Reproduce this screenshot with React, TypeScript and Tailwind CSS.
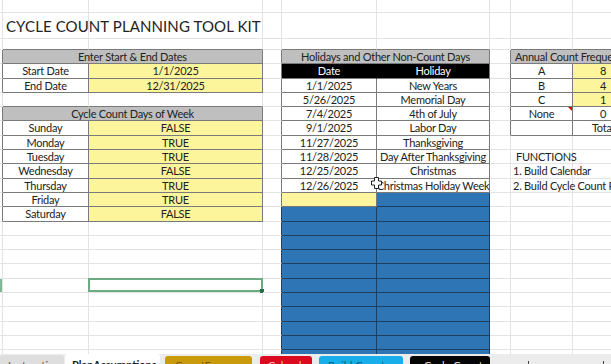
type Kind = "gray" | "black" | "yel" | "wht" | "blue";
type Cell = {
	t?: string;
	k?: Kind;
	span?: boolean;
	left?: boolean;
	big?: boolean;
	pad?: string;
	sel?: boolean;
	mark?: boolean;
	note?: boolean;
	cursor?: boolean;
};
type Row = (Cell | null)[];

// column widths: row header edge, A, B, C, D, E, F, G, H
const W = ["w-[3px]", "w-[86px]", "w-[174px]", "w-[19px]", "w-[95px]", "w-[113px]", "w-[21px]", "w-[62px]", "w-[61px]"];
const W2: Record<number, string> = { 1: "w-[260px]", 4: "w-[208px]", 7: "w-[123px]" };
const H = ["h-[13px]", "h-[26px]", "h-[11px]"];

const BG: Record<Kind, string> = {
	gray: "bg-[#bfbfbf]",
	black: "bg-black text-white",
	yel: "bg-[#fdf59b]",
	wht: "bg-white",
	blue: "bg-[#2e75b6]",
};

const RIGHT = {
	plain: "border-r-[#e3e3e3]",
	dark: "border-r-[#7a7a7a]",
	navy: "border-r-[#1f3f60]",
	black: "border-r-black",
};
const BOTTOM = {
	plain: "border-b-[#e3e3e3]",
	dark: "border-b-[#7a7a7a]",
	navy: "border-b-[#1f3f60]",
	black: "border-b-black",
};

const mk = (parts: Record<number, Cell | null>): Row =>
	Array.from({ length: 9 }, (_, i) => (i in parts ? parts[i] : {}));

const w = (t: string): Cell => ({ t, k: "wht" });
const y = (t: string): Cell => ({ t, k: "yel" });
const blue: Cell = { k: "blue" };

const DAYS: [string, string][] = [
	["Sunday", "FALSE"],
	["Monday", "TRUE"],
	["Tuesday", "TRUE"],
	["Wednesday", "FALSE"],
	["Thursday", "TRUE"],
	["Friday", "TRUE"],
	["Saturday", "FALSE"],
];

const HOLIDAYS: [string, string][] = [
	["1/1/2025", "New Years"],
	["5/26/2025", "Memorial Day"],
	["7/4/2025", "4th of July"],
	["9/1/2025", "Labor Day"],
	["11/27/2025", "Thanksgiving"],
	["11/28/2025", "Day After Thanksgiving"],
	["12/25/2025", "Christmas"],
	["12/26/2025", "Christmas Holiday Week"],
];

const ROWS: Row[] = [];
ROWS.push(mk({}));
ROWS.push(mk({ 1: { t: "CYCLE COUNT PLANNING TOOL KIT", left: true, big: true, pad: "pl-[3px]" } }));
ROWS.push(mk({}));
ROWS.push(
	mk({
		1: { t: "Enter Start & End Dates", k: "gray", span: true },
		2: null,
		4: { t: "Holidays and Other Non-Count Days", k: "gray", span: true },
		5: null,
		7: { t: "Annual Count Frequency", k: "gray", span: true },
		8: null,
	})
);
ROWS.push(mk({ 1: w("Start Date"), 2: y("1/1/2025"), 4: { t: "Date", k: "black" }, 5: { t: "Holiday", k: "black" }, 7: w("A"), 8: y("8") }));
ROWS.push(mk({ 1: w("End Date"), 2: y("12/31/2025"), 4: w(HOLIDAYS[0][0]), 5: w(HOLIDAYS[0][1]), 7: w("B"), 8: y("4") }));
ROWS.push(mk({ 4: w(HOLIDAYS[1][0]), 5: w(HOLIDAYS[1][1]), 7: w("C"), 8: y("1") }));
ROWS.push(
	mk({
		1: { t: "Cycle Count Days of Week", k: "gray", span: true },
		2: null,
		4: w(HOLIDAYS[2][0]),
		5: w(HOLIDAYS[2][1]),
		7: { t: "None", k: "wht", note: true },
		8: w("0"),
	})
);
const side: Record<number, Cell>[] = [
	{ 7: w(""), 8: w("Total") },
	{},
	{ 7: { t: "FUNCTIONS", left: true, pad: "pl-[5px]" } },
	{ 7: { t: "1. Build Calendar", left: true, pad: "pl-[2px]" } },
	{ 7: { t: "2. Build Cycle Count Plan", left: true, pad: "pl-[2px]" } },
];
for (let i = 0; i < 7; i++) {
	const hol = HOLIDAYS[i + 3];
	const parts: Record<number, Cell | null> = { 1: w(DAYS[i][0]), 2: y(DAYS[i][1]), ...(side[i] || {}) };
	if (hol) {
		parts[4] = { t: hol[0], k: "wht", cursor: i === 4 };
		parts[5] = w(hol[1]);
	} else if (i === 5) {
		parts[4] = y("");
		parts[5] = blue;
	} else {
		parts[4] = blue;
		parts[5] = blue;
	}
	ROWS.push(mk(parts));
}
for (let i = 0; i < 10; i++) {
	const parts: Record<number, Cell | null> = { 4: blue, 5: blue };
	if (i === 4) {
		parts[0] = { mark: true };
		parts[2] = { sel: true };
	}
	ROWS.push(mk(parts));
}

function kindAt(r: number, c: number): Kind | undefined {
	const row = ROWS[r];
	if (!row || c > 8) return undefined;
	let i = c;
	while (i > 0 && row[i] === null) i--;
	return row[i]?.k;
}

function line(a?: Kind, b?: Kind): keyof typeof RIGHT {
	if (!a && !b) return "plain";
	if (a === "black" && b === "black") return "black";
	if ((a === "blue" || !a) && (b === "blue" || !b)) return "navy";
	return "dark";
}

const Cursor = () => (
	<svg width="11" height="12" viewBox="0 0 11 12" className="absolute left-[89px] top-[-2px] z-10">
		<polygon
			points="3.5,0.5 7.5,0.5 7.5,4 10.5,4 10.5,8 7.5,8 7.5,11.5 3.5,11.5 3.5,8 0.5,8 0.5,4 3.5,4"
			fill="#fff"
			stroke="#222"
			strokeWidth="1"
		/>
	</svg>
);

function SheetRow({ row, r }: { row: Row; r: number }) {
	return (
		<div className={`flex shrink-0 ${H[r] ?? "h-[14.3px]"}`}>
			{row.map((cell, c) => {
				if (cell === null) return null;
				const end = cell.span ? c + 1 : c;
				const right = RIGHT[line(cell.k, kindAt(r, end + 1))];
				const bottom = BOTTOM[line(cell.k, kindAt(r + 1, c))];
				return (
					<div
						key={c}
						className={[
							"relative shrink-0 flex items-center border-r border-b whitespace-nowrap pt-px",
							cell.span ? W2[c] : W[c],
							right,
							bottom,
							cell.k ? BG[cell.k] : "",
							cell.mark ? "bg-[#7fb693]" : "",
							cell.left ? "justify-start" : "justify-center",
							cell.pad ?? "",
							cell.big ? "text-[15px] tracking-[0.1px]" : "text-[11px] tracking-[-0.25px]",
						].join(" ")}
					>
						{cell.t}
						{cell.note && (
							<svg width="4" height="4" viewBox="0 0 4 4" className="absolute right-0 top-0">
								<polygon points="0,0 4,0 4,4" fill="#e00000" />
							</svg>
						)}
						{cell.cursor && <Cursor />}
						{cell.sel && (
							<div className="absolute -left-px -top-px -right-px bottom-0 border-2 border-[#6aab82]">
								<div className="absolute -right-[3px] -bottom-[3px] w-[4px] h-[4px] bg-[#217346]" />
							</div>
						)}
					</div>
				);
			})}
		</div>
	);
}

const Tab = ({ label, className }: { label: string; className: string }) => (
	<div className={`shrink-0 overflow-hidden rounded-t-[3px] text-[11px] leading-none ${className}`}>{label}</div>
);

export default function App() {
	return (
		<div className="w-[611px] h-[364px] overflow-hidden bg-white text-[#222] [font-family:Lato,'Liberation_Sans',sans-serif]">
			<div className="h-[354px] overflow-hidden flex flex-col">
				{ROWS.map((row, r) => (
					<SheetRow key={r} row={row} r={r} />
				))}
			</div>
			<div className="h-[10px] flex items-end bg-[#ececec]">
				<Tab label="Instructions" className="w-[64px] h-[9px] pt-[5px] bg-[#dedede] pl-[8px] text-[#555]" />
				<Tab label="PlanAssumptions" className="ml-px w-[95px] h-[10px] pt-[5px] bg-white pl-[7px] font-bold text-[#222]" />
				<Tab label="CountFrequency" className="ml-[5px] w-[87px] h-[8px] pt-[4px] bg-[#c99a0c] pl-[10px] text-[#7a5c00]" />
				<Tab label="Calendar" className="ml-[8px] w-[52px] h-[8px] pt-[4px] bg-[#dc0a1e] pl-[8px] text-[#f6c0c0]" />
				<Tab label="Build Count Plan" className="ml-[7px] w-[84px] h-[8px] pt-[4px] bg-[#17aeea] pl-[9px] text-[#0b5c80]" />
				<Tab label="Cycle Count" className="ml-[7px] w-[80px] h-[8px] pt-[4px] bg-[#050505] pl-[14px] text-[#ddd]" />
				<div className="ml-[38px] w-px h-[3px] bg-[#444]" />
				<div className="ml-[74px] w-px h-[3px] bg-[#444]" />
			</div>
		</div>
	);
}
